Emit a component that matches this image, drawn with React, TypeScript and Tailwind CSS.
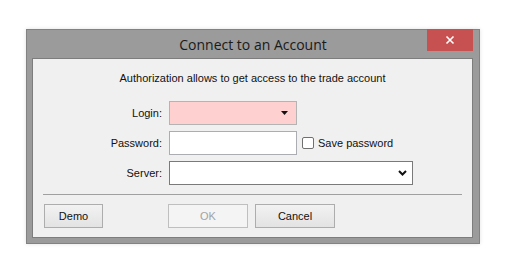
import React from "react";

const btn =
  "h-[24px] border border-[#adadad] bg-gradient-to-b from-[#f2f2f2] to-[#e3e3e3] text-[11px] text-[#111] flex items-center justify-center";

export default function App() {
  return (
    <div
      className="w-[508px] h-[264px] bg-white pt-[29px] pl-[26px]"
      style={{ fontFamily: "'Liberation Sans', Arial, sans-serif" }}
    >
      <div className="relative w-[454px] h-[215px] border border-[#828282] bg-[#9b9b9b] flex flex-col shadow-[0_0_4px_rgba(0,0,0,0.12)]">
        <div className="h-[28px] flex items-center justify-center">
          <span
            className="text-[14px] text-[#1a1a1a] mt-[1px]"
            style={{ fontFamily: "'Open Sans', 'Noto Sans', sans-serif" }}
          >
            Connect to an Account
          </span>
        </div>
        <div className="absolute -top-px right-[6px] w-[46px] h-[22px] bg-[#c75050] flex items-center justify-center">
          <svg width="10" height="10" viewBox="0 0 10 10">
            <path d="M1.5 1.5 L8.5 8.5 M8.5 1.5 L1.5 8.5" stroke="white" strokeWidth="1.6" />
          </svg>
        </div>
        <div className="ml-[5px] mr-[6px] h-[180px] border border-[#7d7d7d] bg-[#f0f0f0] flex flex-col">
          <div className="h-[42px] pt-[12px] flex justify-center text-[11px] leading-[14px] text-[#111]">
            Authorization allows to get access to the trade account
          </div>
          <div className="grid grid-cols-[130px_auto] gap-x-[6px] gap-y-[6px] items-center text-[11px]">
            <div className="text-right text-[#111] pr-[1px]">Login:</div>
            <div className="w-[128px] h-[24px] border border-[#b4b4b4] bg-[#ffd0d0] flex items-center justify-end pr-[8px]">
              <svg width="7" height="4" viewBox="0 0 7 4">
                <path d="M0 0 H7 L3.5 4 Z" fill="#111" />
              </svg>
            </div>
            <div className="text-right text-[#111] pr-[1px]">Password:</div>
            <div className="flex items-center">
              <div className="w-[128px] h-[24px] border border-[#abadb3] bg-white" />
              <div className="ml-[5px] w-[12px] h-[12px] border border-[#707070] rounded-[2px] bg-white" />
              <span className="ml-[4px] text-[#111]">Save password</span>
            </div>
            <div className="text-right text-[#111] pr-[1px]">Server:</div>
            <div className="w-[244px] h-[24px] border border-[#7a7a7a] bg-white flex items-center justify-end pr-[5px]">
              <svg width="9" height="6" viewBox="0 0 9 6">
                <path d="M1 1 L4.5 4.5 L8 1" stroke="#111" strokeWidth="2" fill="none" />
              </svg>
            </div>
          </div>
          <div className="mx-[10px] mt-[9px] h-px bg-[#a0a0a0]" />
          <div className="mt-[9px] flex items-center">
            <div className={`${btn} ml-[11px] w-[59px]`}>Demo</div>
            <div className="ml-[65px] w-[80px] h-[24px] border border-[#bfbfbf] bg-[#f4f4f4] text-[11px] text-[#a3a3a3] flex items-center justify-center">
              OK
            </div>
            <div className={`${btn} ml-[7px] w-[80px]`}>Cancel</div>
          </div>
        </div>
      </div>
    </div>
  );
}
